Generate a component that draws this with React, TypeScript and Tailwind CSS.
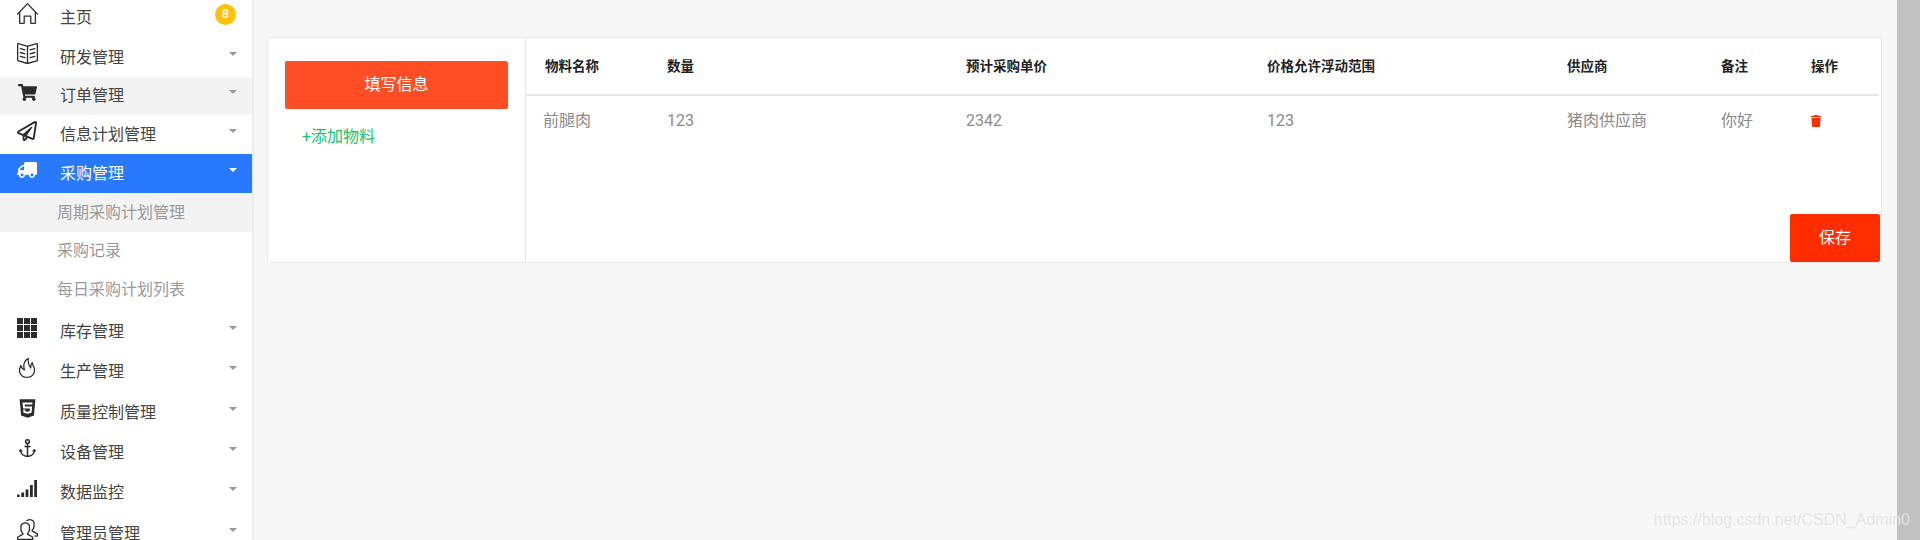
import { FaShoppingCart, FaRegPaperPlane, FaTruck, FaHtml5, FaTrash } from "react-icons/fa";
import { SlHome, SlBookOpen, SlFire, SlPeople } from "react-icons/sl";
import type { ReactNode } from "react";

type MenuItem = {
  name: string;
  icon: ReactNode;
  height: string;
  hover?: boolean;
  active?: boolean;
};

function SignalIcon() {
  return (
    <svg width="20" height="17" viewBox="0 0 20 17" fill="currentColor">
      <rect x="0" y="14.5" width="2.6" height="2.5" />
      <rect x="4.3" y="12.5" width="2.8" height="4.5" />
      <rect x="8.6" y="9.5" width="2.8" height="7.5" />
      <rect x="13" y="5" width="2.8" height="12" />
      <rect x="17.2" y="0" width="2.8" height="17" />
    </svg>
  );
}

function AnchorIcon() {
  return (
    <svg width="17" height="19" viewBox="0 0 17 19" fill="none" stroke="currentColor" strokeWidth="1.5">
      <circle cx="8.5" cy="2.6" r="1.9" />
      <path d="M8.5 4.5V17.5M5.5 7.5H11.5" />
      <path d="M1.5 11.5C2 15 5 17.2 8.5 17.5C12 17.2 15 15 15.5 11.5" />
      <path d="M0 12.5L1.6 10L3.6 12.5M13.4 12.5L15.4 10L17 12.5" fill="currentColor" strokeWidth="0.6" />
    </svg>
  );
}

function GridIcon() {
  const cells = [0, 7, 14];
  return (
    <svg width="20" height="20" viewBox="0 0 20 20" fill="currentColor">
      {cells.map((y) =>
        cells.map((x) => <rect key={`${x}-${y}`} x={x} y={y} width="6" height="6" />),
      )}
    </svg>
  );
}

const topMenu: MenuItem[] = [
  { name: "研发管理", icon: <SlBookOpen size={21} />, height: "h-[39px]" },
  { name: "订单管理", icon: <FaShoppingCart size={19} />, height: "h-[38px]", hover: true },
  { name: "信息计划管理", icon: <FaRegPaperPlane size={20} />, height: "h-[39px]" },
  { name: "采购管理", icon: <FaTruck size={20} className="-scale-x-100" />, height: "h-[39px]", active: true },
];

const subMenu = ["周期采购计划管理", "采购记录", "每日采购计划列表"];

const bottomMenu: MenuItem[] = [
  { name: "库存管理", icon: <GridIcon />, height: "h-[41px]" },
  { name: "生产管理", icon: <SlFire size={20} />, height: "h-[40px]" },
  { name: "质量控制管理", icon: <FaHtml5 size={21} />, height: "h-[41px]" },
  { name: "设备管理", icon: <AnchorIcon />, height: "h-[39px]" },
  { name: "数据监控", icon: <SignalIcon />, height: "h-[41px]" },
  { name: "管理员管理", icon: <SlPeople size={21} />, height: "h-[41px]" },
];

const columns = ["物料名称", "数量", "预计采购单价", "价格允许浮动范围", "供应商", "备注", "操作"];
const row = ["前腿肉", "123", "2342", "123", "猪肉供应商", "你好"];

function MenuRow({ item }: { item: MenuItem }) {
  const tone = item.active
    ? "bg-[#2979ff] text-white"
    : item.hover
      ? "bg-[#f3f3f3] text-[#444]"
      : "bg-white text-[#444]";
  return (
    <div className={`flex items-center shrink-0 ${item.height} ${tone}`}>
      <span className={`flex justify-center w-[22px] ml-[16px] -mt-[8px] ${item.active ? "text-white" : "text-[#2b2b2b]"}`}>
        {item.icon}
      </span>
      <span className="ml-[22px] text-[16px]">{item.name}</span>
      <span
        className={`ml-auto mr-[15px] -mt-[8px] w-0 h-0 border-x-[4px] border-t-[4px] border-x-transparent ${
          item.active ? "border-t-white" : "border-t-[#999]"
        }`}
      />
    </div>
  );
}

export default function App() {
  return (
    <div className="relative flex h-[540px] w-[1920px] overflow-hidden bg-[#f7f7f7] font-['Roboto','Noto_Sans_CJK_SC',sans-serif]">
      {/* Sidebar */}
      <aside className="flex flex-col w-[254px] shrink-0 bg-white border-r-2 border-[#ebebeb]">
        <div className="flex items-center shrink-0 h-[38px] pb-[3px] text-[#444]">
          <span className="flex justify-center w-[22px] ml-[16px] -mt-[9px] text-[#333]">
            <SlHome size={21} />
          </span>
          <span className="ml-[22px] text-[16px]">主页</span>
          <span className="ml-auto mr-[16px] -mt-[7px] flex items-center justify-center w-[21px] h-[21px] rounded-full bg-[#ffc107] text-white text-[13px] font-medium">
            8
          </span>
        </div>
        {topMenu.map((item) => (
          <MenuRow key={item.name} item={item} />
        ))}
        {subMenu.map((name, i) => (
          <div
            key={name}
            className={`flex items-center shrink-0 h-[39px] pl-[57px] text-[16px] text-[#999] ${i === 0 ? "bg-[#f3f3f3]" : "bg-white pb-[2px]"}`}
          >
            {name}
          </div>
        ))}
        <div className="h-[1px] shrink-0" />
        {bottomMenu.map((item) => (
          <MenuRow key={item.name} item={item} />
        ))}
      </aside>

      {/* Main */}
      <main className="flex-1 pl-[13px] pr-[15px] pt-[37px]">
        <div className="flex h-[226px] bg-white border border-[#e8e8e8] rounded-[3px]">
          <div className="w-[258px] shrink-0 border-r border-[#e5e5e5] pt-[23px] pl-[17px] pr-[17px]">
            <button className="w-full h-[48px] rounded-[2px] bg-[#ff4d26] text-white text-[16px]">填写信息</button>
            <div className="mt-[16px] pl-[17px] text-[16px] leading-[24px] text-[#11c46e]">+添加物料</div>
          </div>
          <div className="relative flex-1 pr-[2px]">
            <div className="grid grid-cols-[122px_299px_301px_300px_154px_90px_1fr] h-[58px] items-center pl-[19px] border-b-2 border-[#e6e6e6] pt-[1px] pb-[1px] text-[13.5px] font-bold text-[#222]">
              {columns.map((c) => (
                <div key={c}>{c}</div>
              ))}
            </div>
            <div className="grid grid-cols-[122px_299px_301px_300px_154px_90px_1fr] h-[50px] items-center pl-[19px] text-[16px] text-[#8a8a8a]">
              {row.map((c, i) => (
                <div key={i} className={i === 0 ? "-ml-[2px]" : ""}>
                  {c}
                </div>
              ))}
              <div className="-ml-[1px]">
                <FaTrash size={12} className="text-[#ff2d00]" />
              </div>
            </div>
            <button className="absolute right-[1px] bottom-0 w-[90px] h-[48px] rounded-[2px] bg-[#ff2d00] text-white text-[16px]">
              保存
            </button>
          </div>
        </div>
      </main>

      {/* Scrollbar */}
      <div className="w-[23px] shrink-0 bg-[#c1c1c1]" />

      <div className="absolute right-[10px] bottom-[8px] blur-[0.4px] font-['Liberation_Sans',sans-serif] text-[16px] text-[#e4e4e4]">
        https://blog.csdn.net/CSDN_Admin0
      </div>
    </div>
  );
}
